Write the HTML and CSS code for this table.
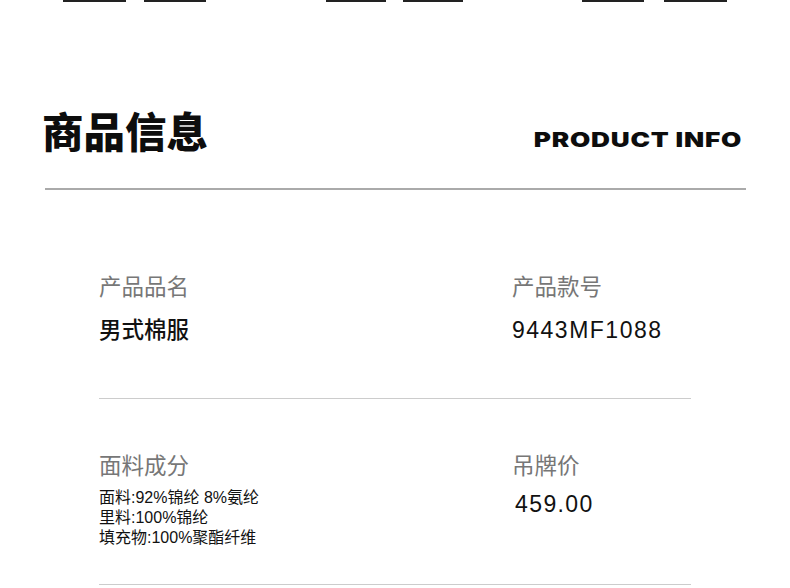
FILE: index.html
```html
<!DOCTYPE html>
<html lang="zh">
<head>
<meta charset="utf-8">
<link rel="stylesheet" href="styles.css">
</head>
<body>
<div class="strip">
  <div class="group g1"><span class="bar b63"></span><span class="bar b62"></span></div>
  <div class="group g2"><span class="bar b60"></span><span class="bar b60"></span></div>
  <div class="group g3"><span class="bar b62"></span><span class="bar b63"></span></div>
</div>
<header class="head">
  <h1 class="title">商品信息</h1>
  <div class="en">PRODUCT INFO</div>
</header>
<div class="rule"></div>
<section class="info">
  <div class="row row1">
    <div class="cell">
      <div class="label">产品品名</div>
      <div class="value">男式棉服</div>
    </div>
    <div class="cell">
      <div class="label">产品款号</div>
      <div class="value code">9443MF1088</div>
    </div>
  </div>
  <div class="row row2">
    <div class="cell">
      <div class="label">面料成分</div>
      <div class="comp">
        <div>面料:92%锦纶 8%氨纶</div>
        <div>里料:100%锦纶</div>
        <div>填充物:100%聚酯纤维</div>
      </div>
    </div>
    <div class="cell">
      <div class="label">吊牌价</div>
      <div class="value price">459.00</div>
    </div>
  </div>
</section>
</body>
</html>
```
FILE: styles.css
```css
html, body {
  margin: 0;
  padding: 0;
  background: #fff;
}
body {
  width: 790px;
  font-family: "Noto Sans CJK SC", "Liberation Sans", sans-serif;
  color: #111;
  overflow: hidden;
}
.strip {
  display: flex;
  height: 2px;
}
.group {
  display: flex;
}
.g1 { margin-left: 63px; gap: 18px; }
.g2 { margin-left: 120px; gap: 17px; }
.g3 { margin-left: 119px; gap: 20px; }
.bar {
  display: block;
  height: 2px;
  background: #222;
}
.b63 { width: 63px; }
.b62 { width: 62px; }
.b60 { width: 60px; }

.head {
  display: flex;
  justify-content: space-between;
  align-items: flex-end;
  margin: 108px 50px 0 42px;
}
.title {
  margin: 0;
  font-size: 41.5px;
  line-height: 41px;
  font-weight: 900;
  color: #0d0d0d;
}
.en {
  font-family: "Inter", sans-serif;
  font-weight: 900;
  font-size: 20px;
  line-height: 20px;
  letter-spacing: 0.6px;
  margin-bottom: 1px;
  margin-right: -2px;
  color: #0d0d0d;
  transform: scaleX(1.31);
  transform-origin: right bottom;
}
.rule {
  margin: 37px 44px 0 45px;
  height: 2px;
  background: #aaa;
}
.info {
  margin: 0 99px;
}
.row {
  display: grid;
  grid-template-columns: 413px 1fr;
  border-bottom: 1px solid #ccc;
}
.row1 {
  padding: 80px 0 53px 0;
}
.row2 {
  padding: 50px 0 36px 0;
}
.label {
  font-size: 22.5px;
  line-height: 30px;
  color: #777;
}
.value {
  margin-top: 13px;
  font-size: 22.5px;
  line-height: 30px;
  font-weight: 500;
  color: #111;
}
.code {
  font-family: "Liberation Sans", sans-serif;
  font-weight: 400;
  font-size: 23px;
  margin-top: 15px;
  letter-spacing: 1.5px;
}
.price {
  font-family: "Liberation Sans", sans-serif;
  font-weight: 400;
  font-size: 23px;
  margin-top: 10px;
  padding-left: 3px;
  letter-spacing: 1.4px;
}
.comp {
  margin-top: 9px;
  font-family: "Liberation Sans", "Noto Sans CJK SC", sans-serif;
  font-size: 16px;
  line-height: 20px;
  color: #111;
}
```
